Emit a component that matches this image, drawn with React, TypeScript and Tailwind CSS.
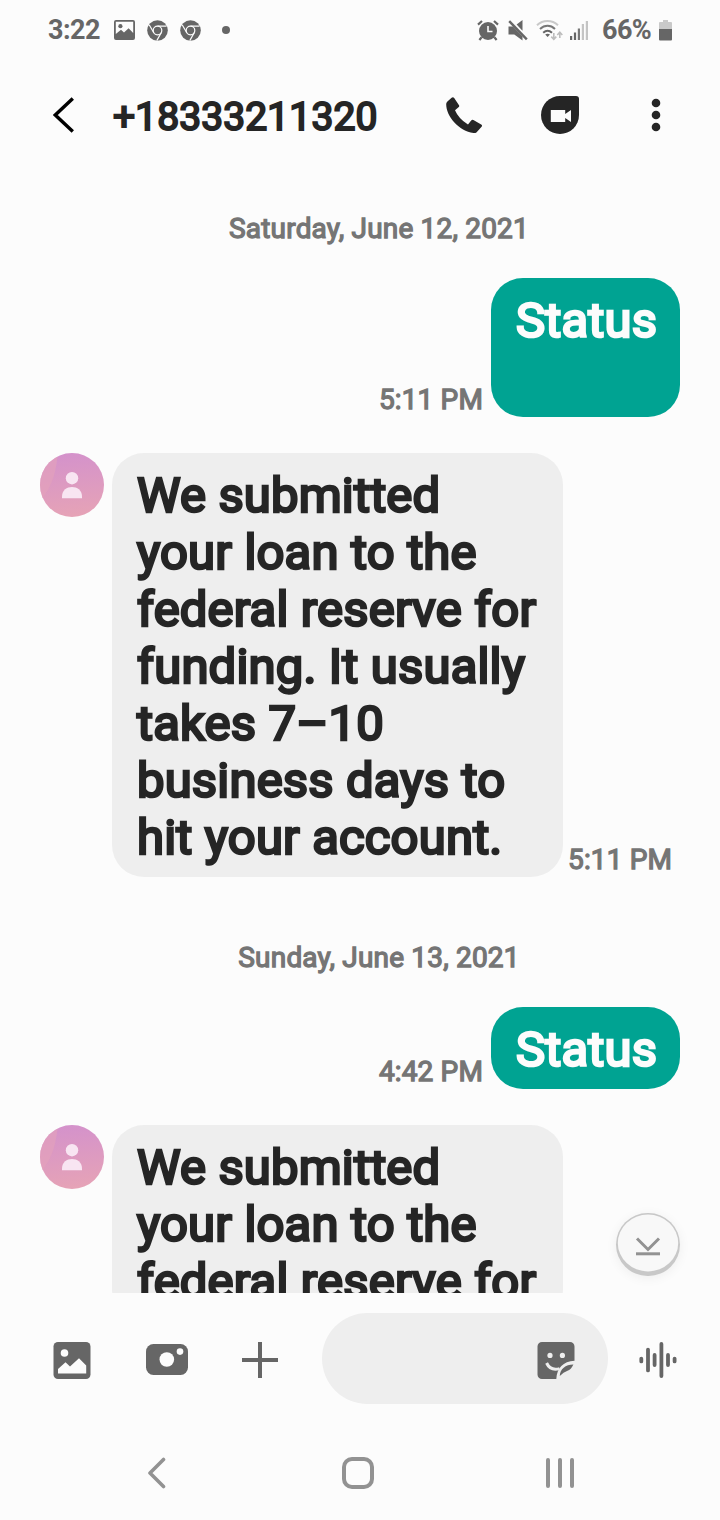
import type { ReactNode } from "react";

interface Message {
    id: number;
    text: string;
    time: string;
    fromMe: boolean;
    trailingLine?: boolean;
}

interface Day {
    label: string;
    messages: Message[];
}

const REPLY = "We submitted your loan to the federal reserve for funding. It usually takes 7–10 business days to hit your account.";

const days: Day[] = [
    {
        label: "Saturday, June 12, 2021",
        messages: [
            { id: 1, text: "Status", time: "5:11 PM", fromMe: true, trailingLine: true },
            { id: 2, text: REPLY, time: "5:11 PM", fromMe: false },
        ],
    },
    {
        label: "Sunday, June 13, 2021",
        messages: [
            { id: 3, text: "Status", time: "4:42 PM", fromMe: true },
            { id: 4, text: "We submitted your loan to the federal reserve for", time: "", fromMe: false },
        ],
    },
];

function ChromeIcon() {
    return (
        <svg width="21" height="21" viewBox="0 0 21 21" fill="none">
            <circle cx="10.5" cy="10.5" r="10.3" fill="#666" />
            <circle cx="10.5" cy="10.5" r="4.3" stroke="#fcfcfc" strokeWidth="1.2" />
            <path d="M10.5 6.2H19.5M6.8 12.7L2.3 5M14.2 12.7L9.8 20.6" stroke="#fcfcfc" strokeWidth="1.2" />
        </svg>
    );
}

function StatusBar() {
    return (
        <div className="flex h-[60px] shrink-0 items-center pl-[48px] pr-[48px] text-[#666]">
            <span className="w-[66px] text-[27px] font-bold leading-none tracking-[-0.5px]">3:22</span>
            <svg width="21" height="20" viewBox="0 0 21 20" className="mr-[12px]">
                <path
                    fillRule="evenodd"
                    d="M2 0H19a2 2 0 0 1 2 2V18a2 2 0 0 1-2 2H2a2 2 0 0 1-2-2V2a2 2 0 0 1 2-2zM1.8 1.8V14L7 9.8L10 12.4L14.6 8.2L19.2 13V1.8z"
                    fill="#666"
                />
                <circle cx="6.4" cy="6.2" r="2.1" fill="#666" />
            </svg>
            <ChromeIcon />
            <span className="w-[12px]" />
            <ChromeIcon />
            <span className="ml-[21px] size-[8px] rounded-full bg-[#666]" />

            {/* Right side indicators */}
            <svg width="22" height="21" viewBox="0 0 22 21" className="ml-auto" fill="none">
                <circle cx="11" cy="11" r="9" fill="#666" />
                <path d="M1 4.6L5 1M21 4.6L17 1M4.6 17.2L2.4 20M17.4 17.2L19.6 20" stroke="#666" strokeWidth="2.2" />
                <path d="M11 6V11.5H15.5" stroke="#fcfcfc" strokeWidth="1.6" />
            </svg>
            <svg width="20" height="21" viewBox="0 0 20 21" className="ml-[9px]">
                <path d="M0.5 6.5H5L14.5 16.5V20.5L6.3 14.6H0.5zM8.6 4.6L14.5 0V10.7z" fill="#666" />
                <path d="M1.2 1.2L18.8 19.4" stroke="#666" strokeWidth="2.4" />
            </svg>
            <svg width="27" height="21" viewBox="0 0 27 21" className="ml-[8px]" fill="none">
                <path d="M1 5.2C7 -0.4 16 -0.4 22 5.2" stroke="#c9c9c9" strokeWidth="2" />
                <path d="M4 9C8.6 4.8 14.6 4.8 19 9" stroke="#777" strokeWidth="2" />
                <path d="M7.2 12.7C10 10.2 13.2 10.2 16 12.7" stroke="#666" strokeWidth="2" />
                <path d="M9.2 14.6C10.8 13.4 12.4 13.4 14 14.6L11.6 17z" fill="#666" />
                <path d="M17.8 13V19M15.3 16.6L17.8 19.4L20.3 16.6M23.8 18V12.4M21.3 15L23.8 12.2L26.3 15" stroke="#bdbdbd" strokeWidth="1.6" />
            </svg>
            <svg width="18" height="20" viewBox="0 0 18 20" className="ml-[7px]">
                <rect x="0" y="16" width="2.2" height="4" fill="#666" />
                <rect x="3.9" y="12.5" width="2.2" height="7.5" fill="#666" />
                <rect x="7.8" y="8.5" width="2.2" height="11.5" fill="#777" />
                <rect x="11.8" y="4" width="2.2" height="16" fill="#c4c4c4" />
                <rect x="15.8" y="1" width="2.2" height="19" fill="#c4c4c4" />
            </svg>
            <span className="ml-[14px] w-[57px] text-[27px] font-bold leading-none tracking-[-0.6px]">66%</span>
            <svg width="13" height="21" viewBox="0 0 13 21">
                <path d="M4 0H9V2H12a1 1 0 0 1 1 1V10H0V3a1 1 0 0 1 1-1H4z" fill="#c9c9c9" />
                <path d="M0 9H13V19.5a1 1 0 0 1-1 1H1a1 1 0 0 1-1-1z" fill="#666" />
            </svg>
        </div>
    );
}

function Header() {
    return (
        <header className="flex h-[110px] shrink-0 items-center pl-[53px]">
            <svg width="21" height="36" viewBox="0 0 21 36" fill="none">
                <path d="M19.8 1.4L2.3 18L19.8 34.4" stroke="#000" strokeWidth="3.4" />
            </svg>
            <h1 className="ml-[39px] w-[333px] pt-[4px] text-[39px] font-normal leading-[46px] tracking-[0.1px] text-[#252525] [-webkit-text-stroke:2px_#252525]">+18333211320</h1>
            <svg width="37" height="37" viewBox="0 0 37 37">
                <path
                    d="M5.6 .8Q7-.4 8.2 1L13 8.2Q13.6 9.2 12.8 10L9 13.2Q12.5 21.5 22 27.6L25.2 23.5Q26.2 22.4 27.4 23L35.2 27.6Q36.6 28.6 35.6 29.8L30.4 35.4Q29.2 36.3 27.4 36C13 34 0 19.5 .2 7Q.2 5.4 1.4 4.4z"
                    fill="#252525"
                />
            </svg>
            <svg width="38" height="38" viewBox="0 0 38 38" className="ml-[58px]">
                <path d="M19 0H35a3 3 0 0 1 3 3V19A19 19 0 1 1 19 0z" fill="#252525" />
                <path d="M9.8 14H24.2V18L30 14V26L24.2 22V26H9.8z" fill="#fcfcfc" />
            </svg>
            <svg width="10" height="34" viewBox="0 0 10 34" className="ml-[72px]" fill="#252525">
                <circle cx="5" cy="5" r="4.3" />
                <circle cx="5" cy="17" r="4.3" />
                <circle cx="5" cy="29" r="4.3" />
            </svg>
        </header>
    );
}

function Avatar() {
    return (
        <svg width="64" height="64" viewBox="0 0 64 64" className="mr-[8px] shrink-0 self-start">
            <defs>
                <linearGradient id="avatar" x1="0.5" y1="0" x2="0.6" y2="1">
                    <stop offset="0" stopColor="#d492cb" />
                    <stop offset="1" stopColor="#e6a3b6" />
                </linearGradient>
                <clipPath id="round">
                    <circle cx="32" cy="32" r="32" />
                </clipPath>
            </defs>
            <g clipPath="url(#round)">
                <rect width="64" height="64" fill="url(#avatar)" />
                <path d="M0 0H18C16 16 14 32 0 48z" fill="#e3a2bc" fillOpacity="0.65" />
            </g>
            <circle cx="32" cy="25.2" r="6.2" fill="#f8e5f2" />
            <path d="M22 45.3V43.5C22 37 27 34 32 34S42 37 42 43.5V45.3z" fill="#f8e5f2" />
        </svg>
    );
}

function Time({ children }: { children: ReactNode }) {
    return (
        <span className="whitespace-nowrap text-[28px] font-normal leading-[34px] tracking-[0.15px] text-[#757575] [-webkit-text-stroke:1.3px_#757575]">
            {children}
        </span>
    );
}

function MessageRow({ message }: { message: Message }) {
    if (message.fromMe) {
        return (
            <div className="flex items-end justify-end pr-[40px]">
                <div className="mr-[8px]">
                    <Time>{message.time}</Time>
                </div>
                <div className="w-[189px] whitespace-pre-wrap rounded-[32px] bg-[#00a392] pb-[11px] pl-[25px] pt-[14px] text-[49px] font-normal leading-[57px] tracking-[0.17px] text-[#fcfcfc] [-webkit-text-stroke:2.6px_#fcfcfc]">
                    {message.text}
                    {message.trailingLine && <br />}
                    {message.trailingLine && " "}
                </div>
            </div>
        );
    }

    return (
        <div className="flex items-end pl-[40px]">
            <Avatar />
            <div className="w-[451px] shrink-0 rounded-[32px] bg-[#eee] pb-[11px] pl-[25px] pr-[20px] pt-[14px] text-[49px] font-normal leading-[57px] tracking-[0.17px] text-[#252525] [-webkit-text-stroke:2.6px_#252525]">
                {message.text}
            </div>
            {message.time && (
                <div className="ml-[5px]">
                    <Time>{message.time}</Time>
                </div>
            )}
        </div>
    );
}

function Conversation() {
    return (
        <main className="relative h-[1123px] shrink-0 overflow-hidden">
            {days.map((day) => (
                <section key={day.label} className="pt-[41px]">
                    <h2 className="pl-[38px] text-center text-[28px] font-normal leading-[36px] tracking-[0.18px] text-[#757575] [-webkit-text-stroke:1.3px_#757575]">
                        {day.label}
                    </h2>
                    <div className="mt-[31px] flex flex-col gap-[36px]">
                        {day.messages.map((message) => (
                            <MessageRow key={message.id} message={message} />
                        ))}
                    </div>
                    <div className="h-[22px]" />
                </section>
            ))}

            {/* Jump to latest */}
            <button className="absolute bottom-[17px] right-[40px] h-[63px] w-[64px] rounded-full bg-[#c8c8c8] shadow-[0_2px_12px_rgba(0,0,0,0.06)]">
                <svg width="64" height="63" viewBox="0 0 64 63" fill="none">
                    <ellipse cx="32" cy="30" rx="30.2" ry="28.4" fill="#f8f8f8" />
                    <path d="M21 25.5L32 36.5L43 25.5" stroke="#929292" strokeWidth="3" />
                    <path d="M20 40.8H44" stroke="#929292" strokeWidth="3" />
                </svg>
            </button>
        </main>
    );
}

function Composer() {
    return (
        <div className="flex h-[134px] shrink-0 items-center pl-[53px]">
            <svg width="38" height="37" viewBox="0 0 38 37">
                <rect x="0.5" width="37" height="37" rx="4.5" fill="#666" />
                <circle cx="11.5" cy="11" r="3.8" fill="#fcfcfc" />
                <path d="M5 31.5V27L12.5 20.3L17 24.5L26 16.2L33.2 23.5V31.5z" fill="#fcfcfc" />
            </svg>
            <svg width="42" height="31" viewBox="0 0 42 31" className="mb-[2px] ml-[55px]">
                <rect width="42" height="31" rx="7.5" fill="#666" />
                <circle cx="20.8" cy="15.5" r="7.3" fill="#fcfcfc" />
                <circle cx="34" cy="7.6" r="3.3" fill="#fcfcfc" />
            </svg>
            <svg width="36" height="36" viewBox="0 0 36 36" className="ml-[54px]">
                <path d="M18 0V36M0 18H36" stroke="#666" strokeWidth="4" />
            </svg>
            <div className="mb-[3px] ml-[44px] flex h-[91px] w-[286px] items-center justify-end rounded-full bg-[#eee] pr-[33px] pt-[3px]">
                <svg width="38" height="37" viewBox="0 0 38 37" fill="none">
                    <path d="M5 0H33a4.5 4.5 0 0 1 4.5 4.5V18.8C26 19.5 20 26 19.3 37H5A4.5 4.5 0 0 1 .5 32.5V4.5A4.5 4.5 0 0 1 5 0z" fill="#666" />
                    <circle cx="13" cy="13.4" r="2.6" fill="#eee" />
                    <circle cx="25.4" cy="13.4" r="2.6" fill="#eee" />
                    <path d="M9.6 21C12 26.2 16.5 28.2 22.5 26.6" stroke="#eee" strokeWidth="3" />
                    <path d="M22.8 34C23 27 28.5 22.4 36.4 22.4Q34 27.5 30.5 28.8Q26.5 30 22.8 34z" fill="#666" />
                </svg>
            </div>
            <svg width="38" height="38" viewBox="0 0 38 38" className="ml-[31px]" fill="none">
                <path d="M2.3 17.6V20.4M9 8.6V29.4M15.6 14V24M22.4 3V35M29 14V24M35.6 17.6V20.4" stroke="#666" strokeWidth="3.8" strokeLinecap="round" />
            </svg>
        </div>
    );
}

function NavBar() {
    return (
        <nav className="flex h-[92px] items-center pl-[147px]">
            <svg width="20" height="32" viewBox="0 0 20 32" fill="none">
                <path d="M16.5 2.5L3 16L16.5 29.5" stroke="#929292" strokeWidth="3.6" strokeLinecap="round" strokeLinejoin="round" />
            </svg>
            <span className="ml-[175px] size-[32px] rounded-[10px] border-[4px] border-[#929292]" />
            <svg width="32" height="32" viewBox="0 0 32 32" className="ml-[170px]" fill="none">
                <path d="M4 3V29M16 3V29M28 3V29" stroke="#929292" strokeWidth="4" strokeLinecap="round" />
            </svg>
        </nav>
    );
}

export default function App() {
    return (
        <div className="flex h-[1520px] w-[720px] flex-col overflow-hidden bg-[#fcfcfc] font-[Roboto,sans-serif]">
            <StatusBar />
            <Header />
            <Conversation />
            <Composer />
            <NavBar />
        </div>
    );
}
